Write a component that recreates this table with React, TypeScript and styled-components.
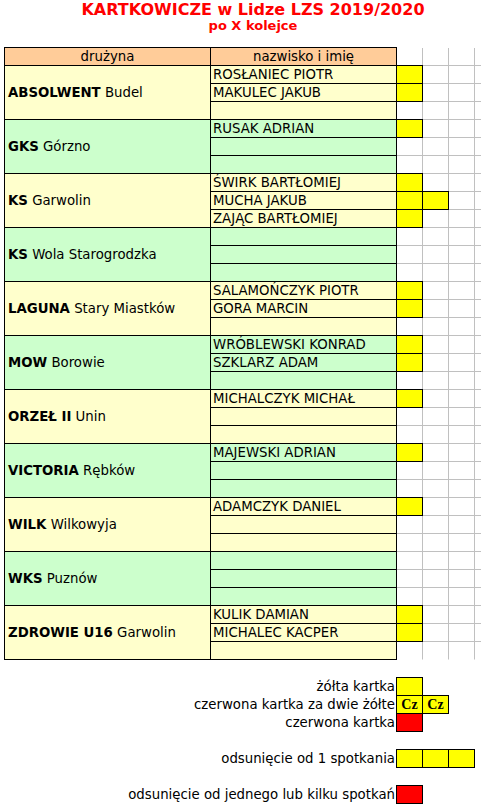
import React from 'react';
import styled, { createGlobalStyle, css } from 'styled-components';

const GlobalStyle = createGlobalStyle`
  html, body { margin: 0; padding: 0; overflow: hidden; background: #fff; }
  body { font-family: "DejaVu Sans", Verdana, sans-serif; color: #000; }
`;

const COLS = '206px 186px 26px 26px 26px 26px';
const YELLOW = '#ffff00';
const RED = '#ff0000';
const ROW_BG = ['#ffffcc', '#ccffcc'];
const TEXT_SIZE = '13.3px';

type Player = { name: string; cards: number };
type Team = { code: string; town: string; players: Player[] };

const TEAMS: Team[] = [
  { code: 'ABSOLWENT', town: 'Budel', players: [{ name: 'ROSŁANIEC PIOTR', cards: 1 }, { name: 'MAKULEC JAKUB', cards: 1 }] },
  { code: 'GKS', town: 'Górzno', players: [{ name: 'RUSAK ADRIAN', cards: 1 }] },
  { code: 'KS', town: 'Garwolin', players: [{ name: 'ŚWIRK BARTŁOMIEJ', cards: 1 }, { name: 'MUCHA JAKUB', cards: 2 }, { name: 'ZAJĄC BARTŁOMIEJ', cards: 1 }] },
  { code: 'KS', town: 'Wola Starogrodzka', players: [] },
  { code: 'LAGUNA', town: 'Stary Miastków', players: [{ name: 'SALAMOŃCZYK PIOTR', cards: 1 }, { name: 'GORA MARCIN', cards: 1 }] },
  { code: 'MOW', town: 'Borowie', players: [{ name: 'WRÓBLEWSKI KONRAD', cards: 1 }, { name: 'SZKLARZ ADAM', cards: 1 }] },
  { code: 'ORZEŁ II', town: 'Unin', players: [{ name: 'MICHALCZYK MICHAŁ', cards: 1 }] },
  { code: 'VICTORIA', town: 'Rębków', players: [{ name: 'MAJEWSKI ADRIAN', cards: 1 }] },
  { code: 'WILK', town: 'Wilkowyja', players: [{ name: 'ADAMCZYK DANIEL', cards: 1 }] },
  { code: 'WKS', town: 'Puznów', players: [] },
  { code: 'ZDROWIE U16', town: 'Garwolin', players: [{ name: 'KULIK DAMIAN', cards: 1 }, { name: 'MICHALEC KACPER', cards: 1 }] },
];

const Sheet = styled.main`
  width: 496px;
  padding-left: 5px;
  display: flex;
  flex-direction: column;
`;

const TitleBlock = styled.header`
  height: 48px;
  display: flex;
  flex-direction: column;
  align-items: center;
  color: #ff0000;
`;

const Title = styled.h1`
  margin: 0;
  font-size: 16px;
  line-height: 19px;
  font-weight: bold;
  white-space: nowrap;
`;

const Subtitle = styled.h2`
  margin: 0;
  font-size: 13px;
  line-height: 13px;
  font-weight: bold;
`;

const boxed = css`
  box-sizing: border-box;
  border: 1px solid #000;
  margin: -1px 0 0 -1px;
  width: calc(100% + 1px);
  height: calc(100% + 1px);
`;

const Table = styled.section`
  display: flex;
  flex-direction: column;
`;

const Band = styled.div<{ $rows: number }>`
  display: grid;
  grid-template-columns: ${COLS};
  grid-template-rows: repeat(${(p) => p.$rows}, 18px);
`;

const HeaderCell = styled.div`
  ${boxed}
  background: #ffcc99;
  font-size: ${TEXT_SIZE};
  line-height: 17px;
  text-align: center;
  white-space: nowrap;
`;

const TeamCell = styled.div<{ $bg: string }>`
  ${boxed}
  grid-row: span 3;
  background: ${(p) => p.$bg};
  display: flex;
  align-items: center;
  padding-left: 3px;
  font-size: ${TEXT_SIZE};
  white-space: nowrap;
`;

const TeamCode = styled.b`
  font-weight: bold;
`;

const NameCell = styled.div<{ $bg: string }>`
  ${boxed}
  background: ${(p) => p.$bg};
  padding-left: 2px;
  font-size: ${TEXT_SIZE};
  line-height: 17px;
  white-space: nowrap;
  overflow: hidden;
`;

const GridCell = styled.div<{ $open?: boolean }>`
  box-sizing: border-box;
  border-right: 1px solid #c0c0c0;
  border-bottom: 1px solid ${(p) => (p.$open ? 'transparent' : '#c0c0c0')};
`;

const Mark = styled.div<{ $color: string }>`
  ${boxed}
  background: ${(p) => p.$color};
  display: flex;
  align-items: center;
  justify-content: center;
  font-family: "Liberation Serif", "Times New Roman", serif;
  font-weight: bold;
  font-size: 14px;
`;

const Legend = styled.section`
  margin-top: 18px;
  display: flex;
  flex-direction: column;
  gap: 18px;
`;

const LegendGroup = styled.div`
  display: flex;
  flex-direction: column;
`;

const LegendRow = styled.div`
  display: grid;
  grid-template-columns: 392px repeat(3, 26px);
  grid-template-rows: 18px;
`;

const LegendLabel = styled.div`
  text-align: right;
  padding-right: 2px;
  font-size: ${TEXT_SIZE};
  line-height: 18px;
  white-space: nowrap;
`;

function TeamBand({ team, bg, last }: { team: Team; bg: string; last: boolean }) {
  return (
    <Band $rows={3}>
      <TeamCell $bg={bg}>
        <span>
          <TeamCode>{team.code}</TeamCode> {team.town}
        </span>
      </TeamCell>
      {[0, 1, 2].map((i) => {
        const p = team.players[i];
        const cards = p ? p.cards : 0;
        return (
          <React.Fragment key={i}>
            <NameCell $bg={bg}>{p ? p.name : ''}</NameCell>
            {[0, 1, 2, 3].map((c) =>
              c < cards ? <Mark key={c} $color={YELLOW} /> : <GridCell key={c} $open={last && i === 2} />
            )}
          </React.Fragment>
        );
      })}
    </Band>
  );
}

export default function App() {
  return (
    <>
      <GlobalStyle />
      <Sheet>
        <TitleBlock>
          <Title>KARTKOWICZE w Lidze LZS 2019/2020</Title>
          <Subtitle>po X kolejce</Subtitle>
        </TitleBlock>
        <Table>
          <Band $rows={1}>
            <HeaderCell>drużyna</HeaderCell>
            <HeaderCell>nazwisko i imię</HeaderCell>
            <GridCell />
            <GridCell />
            <GridCell />
            <GridCell />
          </Band>
          {TEAMS.map((t, i) => (
            <TeamBand key={i} team={t} bg={ROW_BG[i % 2]} last={i === TEAMS.length - 1} />
          ))}
        </Table>
        <Legend>
          <LegendGroup>
            <LegendRow>
              <LegendLabel>żółta kartka</LegendLabel>
              <Mark $color={YELLOW} />
            </LegendRow>
            <LegendRow>
              <LegendLabel>czerwona kartka za dwie żółte</LegendLabel>
              <Mark $color={YELLOW}>Cz</Mark>
              <Mark $color={YELLOW}>Cz</Mark>
            </LegendRow>
            <LegendRow>
              <LegendLabel>czerwona kartka</LegendLabel>
              <Mark $color={RED} />
            </LegendRow>
          </LegendGroup>
          <LegendRow>
            <LegendLabel>odsunięcie od 1 spotkania</LegendLabel>
            <Mark $color={YELLOW} />
            <Mark $color={YELLOW} />
            <Mark $color={YELLOW} />
          </LegendRow>
          <LegendRow>
            <LegendLabel>odsunięcie od jednego lub kilku spotkań</LegendLabel>
            <Mark $color={RED} />
          </LegendRow>
        </Legend>
      </Sheet>
    </>
  );
}
